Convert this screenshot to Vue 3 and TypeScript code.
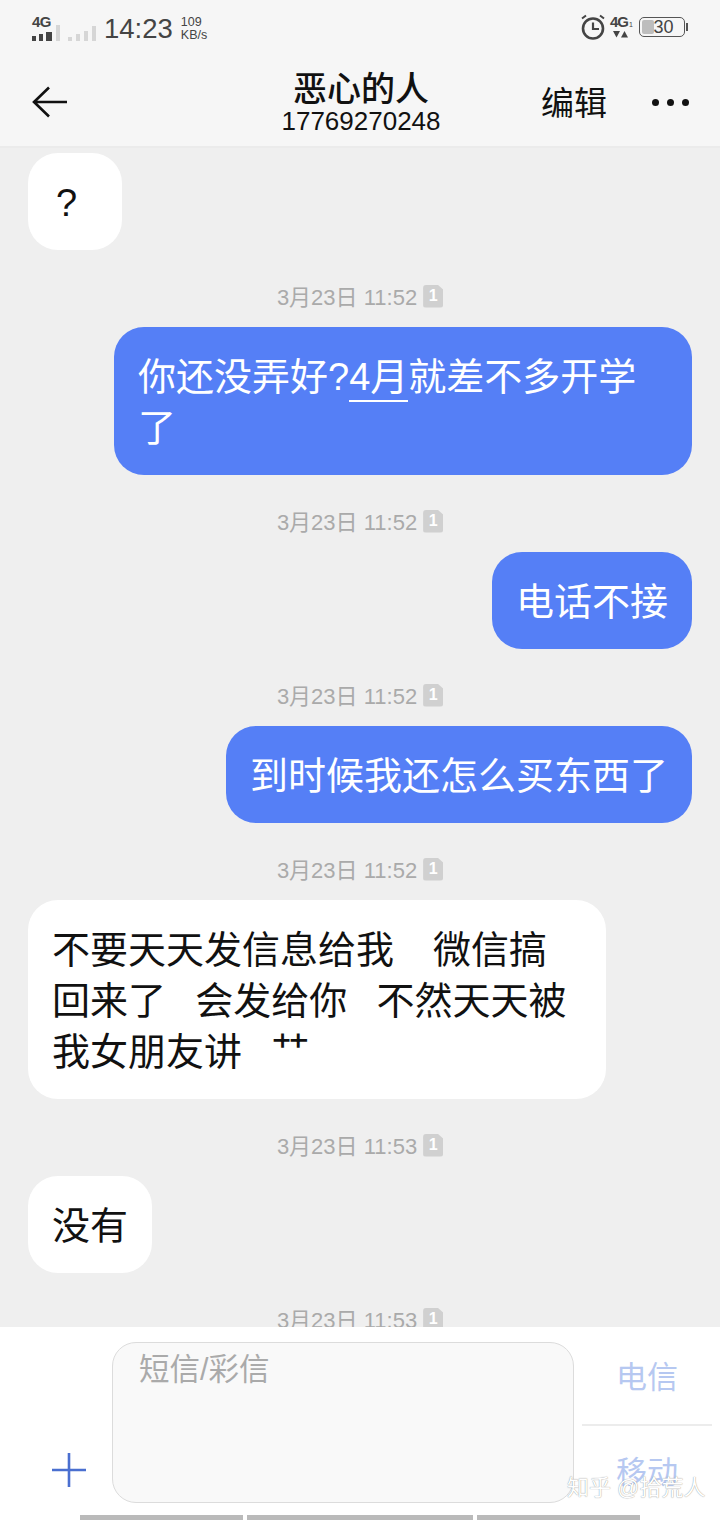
<script setup lang="ts">
interface Msg {
  side: 'in' | 'out'
  lines: string[]
  time?: string
  kind?: 'short' | 'full'
}
const messages: Msg[] = [
  { side: 'in', lines: ['?'], kind: 'short' },
  { side: 'out', time: '3月23日 11:52', lines: ['你还没弄好?', '了'], kind: 'full' },
  { side: 'out', time: '3月23日 11:52', lines: ['电话不接'] },
  { side: 'out', time: '3月23日 11:52', lines: ['到时候我还怎么买东西了'] },
  {
    side: 'in',
    time: '3月23日 11:52',
    lines: ['不要天天发信息给我    微信搞', '回来了   会发给你   不然天天被', '我女朋友讲   ⺿'],
    kind: 'full',
  },
  { side: 'in', time: '3月23日 11:53', lines: ['没有'] },
]
</script>

<template>
  <div class="phone">
    <header class="top">
      <div class="status">
        <div class="status-left">
          <div class="sig-col">
            <span class="sig-text">4G</span>
            <svg class="signal" width="66" height="17" viewBox="0 0 66 17">
              <rect x="0" y="11" width="4" height="5" fill="#444" />
              <rect x="7" y="9" width="4" height="7" fill="#444" />
              <rect x="14" y="7" width="6" height="9" fill="#444" />
              <rect x="24" y="0" width="4" height="16" fill="#d6d6d6" />
              <rect x="36" y="12" width="4" height="4" fill="#d6d6d6" />
              <rect x="44" y="9" width="4" height="7" fill="#d6d6d6" />
              <rect x="52" y="6" width="4" height="10" fill="#d6d6d6" />
              <rect x="60" y="1" width="4" height="15" fill="#d6d6d6" />
            </svg>
          </div>
          <span class="clock">14:23</span>
          <span class="speed"><span>109</span><span>KB/s</span></span>
        </div>
        <div class="status-right">
          <svg width="26" height="26" viewBox="0 0 26 26" fill="none" stroke="#444">
            <circle cx="13" cy="14.500" r="10" stroke-width="2.600" />
            <path d="M13 8.500v6.500h6" stroke-width="2.200" />
            <path d="M2 4.500 6 1.500M24 4.500 20 1.500" stroke-width="2" />
          </svg>
          <div class="net">
            <div class="net-top"><span class="net-text">4G</span><span class="net-sub">1</span></div>
            <svg class="net-arrows" width="16" height="7" viewBox="0 0 16 7">
              <path d="M0 0h7L3.500 6.500z" fill="#444" />
              <path d="M8 6.500h7L11.500 0z" fill="#444" />
            </svg>
          </div>
          <div class="battery">
            <div class="battery-fill"></div>
            <span class="battery-num">30</span>
            <div class="battery-cap"></div>
          </div>
        </div>
      </div>
      <div class="nav">
        <div class="nav-left">
          <svg width="36" height="32" viewBox="0 0 36 32" fill="none" stroke="#111" stroke-width="2.600">
            <path d="M35 16H2M17 1.500 2 16l15 14.500" />
          </svg>
        </div>
        <div class="nav-title">
          <span class="name">恶心的人</span>
          <span class="phone-num">17769270248</span>
        </div>
        <div class="nav-right">
          <span class="edit">编辑</span>
          <div class="dots"><i></i><i></i><i></i></div>
        </div>
      </div>
    </header>

    <main class="messages">
      <template v-for="(m, i) in messages" :key="i">
        <div v-if="m.time" class="time">
          <span>{{ m.time }}</span>
          <span class="sim">1</span>
        </div>
        <div class="row" :class="m.side">
          <div class="bubble" :class="[m.side, m.kind]">
            <template v-if="i === 1">
              <div class="line">你还没弄好?<span class="link">4月</span>就差不多开学</div>
              <div class="line">了</div>
            </template>
            <template v-else>
              <div v-for="(l, j) in m.lines" :key="j" class="line">{{ l }}</div>
            </template>
          </div>
        </div>
      </template>
      <div class="time">
        <span>3月23日 11:53</span>
        <span class="sim">1</span>
      </div>
    </main>

    <footer class="composer">
      <div class="plus-cell">
        <svg width="34" height="34" viewBox="0 0 34 34" stroke="#4a6fd0" stroke-width="2.600">
          <path d="M17 0v34M0 17h34" />
        </svg>
      </div>
      <div class="input">短信/彩信</div>
      <div class="sims">
        <div class="sim-btn">电信</div>
        <div class="sim-btn second">移动</div>
      </div>
      <span class="watermark">知乎 @拾荒人</span>
    </footer>
    <div class="home">
      <i class="seg-a"></i><i class="seg-b"></i><i class="seg-a"></i>
    </div>
  </div>
</template>

<style>
html,
body {
  margin: 0;
  background: #fff;
}
</style>

<style scoped>
.phone {
  width: 720px;
  height: 1520px;
  display: flex;
  flex-direction: column;
  overflow: hidden;
  position: relative;
  background: #efefef;
  font-family: "Liberation Sans", "Noto Sans CJK SC", sans-serif;
  color: #111;
}
.top {
  height: 148px;
  box-sizing: border-box;
  flex: none;
  background: #f6f6f6;
  border-bottom: 2px solid #ebebeb;
}
.status {
  height: 58px;
  display: flex;
  justify-content: space-between;
  align-items: flex-start;
  padding: 14px 35px 0 32px;
  box-sizing: border-box;
}
.status-left {
  display: flex;
  align-items: center;
  gap: 6px;
}
.sig-col {
  display: flex;
  flex-direction: column;
  height: 26px;
}
.sig-text {
  font-size: 15px;
  font-weight: bold;
  line-height: 12px;
  height: 12px;
  color: #444;
  letter-spacing: -0.5px;
}
.signal {
  margin-top: -3px;
}
.clock {
  font-size: 27.500px;
  line-height: 30px;
  color: #444;
}
.speed {
  display: flex;
  flex-direction: column;
  font-size: 12.500px;
  line-height: 13px;
  color: #444;
  margin-left: 2px;
}
.status-right {
  display: flex;
  align-items: center;
  gap: 4px;
}
.net {
  width: 24px;
  height: 24px;
  display: flex;
  flex-direction: column;
}
.net-top {
  display: flex;
  align-items: flex-end;
  height: 14px;
}
.net-text {
  font-size: 15px;
  font-weight: bold;
  line-height: 14px;
  color: #444;
  letter-spacing: -1px;
}
.net-sub {
  font-size: 7px;
  line-height: 8px;
  color: #444;
  margin-left: 1px;
}
.net-arrows {
  margin: 2px 0 0 3px;
}
.battery {
  width: 46px;
  height: 20px;
  box-sizing: border-box;
  border: 1px solid #555;
  border-radius: 5px;
  position: relative;
  margin-left: 1px;
  display: flex;
  align-items: center;
  justify-content: center;
}
.battery-fill {
  position: absolute;
  left: 2px;
  top: 2px;
  bottom: 2px;
  width: 12px;
  background: #bdbdbd;
  border-radius: 2px;
}
.battery-num {
  position: relative;
  font-size: 18px;
  line-height: 18px;
  color: #444;
  margin-left: 3px;
}
.battery-cap {
  position: absolute;
  right: -4px;
  top: 5px;
  width: 2px;
  height: 8px;
  background: #555;
}
.nav {
  height: 88px;
  box-sizing: border-box;
  display: grid;
  grid-template-columns: 1fr auto 1fr;
  align-items: center;
  padding: 2px 31px 0 33px;
}
.nav-left {
  display: flex;
  margin: -2px 0 0 -1px;
}
.nav-title {
  display: flex;
  flex-direction: column;
  align-items: center;
}
.name {
  font-size: 34px;
  font-weight: 500;
  line-height: 36px;
  color: #111;
}
.phone-num {
  font-size: 26px;
  line-height: 29px;
  color: #111;
}
.nav-right {
  display: flex;
  justify-content: flex-end;
  align-items: center;
  gap: 45px;
}
.edit {
  font-size: 33px;
  line-height: 40px;
  margin-top: 2px;
}
.dots {
  display: flex;
  gap: 8px;
  margin-top: -2px;
}
.dots i {
  width: 7px;
  height: 7px;
  border-radius: 50%;
  background: #111;
}
.messages {
  flex: 1;
  min-height: 0;
  overflow: hidden;
  padding: 5px 28px 0;
}
.time {
  height: 77px;
  display: flex;
  align-items: center;
  justify-content: center;
  gap: 6px;
  font-size: 22px;
  color: #aaa;
  padding-top: 21px;
  padding-bottom: 8px;
  box-sizing: border-box;
}
.sim {
  width: 20px;
  height: 23px;
  margin-top: 2px;
  background: #d0d0d0;
  color: #fff;
  font-size: 16px;
  font-weight: bold;
  display: flex;
  align-items: center;
  justify-content: center;
  border-radius: 3px;
  clip-path: polygon(0 0, 72% 0, 100% 22%, 100% 100%, 0 100%);
}
.row {
  display: flex;
}
.row.out {
  justify-content: flex-end;
}
.bubble {
  padding: 25px 24px 21px;
  border-radius: 30px;
  font-size: 38px;
  line-height: 51px;
  white-space: pre;
  word-spacing: -0.800px;
  box-sizing: border-box;
}
.bubble.in {
  background: #fff;
  color: #111;
}
.bubble.out {
  background: #557ff6;
  color: #fff;
}
.bubble.short {
  width: 94px;
  padding-left: 28px;
}
.bubble.full {
  width: 578px;
}
.link {
  border-bottom: 2px solid #fff;
  padding-bottom: 2px;
}
.composer {
  flex: none;
  height: 188px;
  background: #fff;
  box-sizing: border-box;
  padding: 15px 8px 12px 52px;
  display: flex;
  align-items: stretch;
  position: relative;
}
.plus-cell {
  width: 60px;
  display: flex;
  align-items: flex-end;
  padding-bottom: 16px;
}
.input {
  width: 462px;
  box-sizing: border-box;
  background: #f9f9f9;
  border: 1px solid #dcdcdc;
  border-radius: 24px;
  padding: 8px 26px;
  font-size: 30.500px;
  line-height: 36px;
  color: #aaa;
}
.sims {
  flex: 1;
  margin-left: 8px;
  display: flex;
  flex-direction: column;
}
.sim-btn {
  height: 84px;
  box-sizing: border-box;
  display: flex;
  align-items: center;
  justify-content: center;
  font-size: 31px;
  color: #b6c8f1;
  border-bottom: 2px solid #ececec;
  padding-bottom: 18px;
}
.sim-btn.second {
  border-bottom: 0;
  height: 77px;
  padding-top: 10px;
  padding-bottom: 0;
}
.watermark {
  position: absolute;
  left: 567px;
  top: 147px;
  font-size: 22px;
  line-height: 28px;
  color: #fff;
  text-shadow: 0 0 1px #777;
}
.home {
  flex: none;
  height: 5px;
  background: #fff;
  padding-left: 80px;
  display: flex;
  gap: 4px;
}
.home i {
  background: #bababa;
  display: block;
  height: 5px;
}
.seg-a {
  width: 163px;
}
.seg-b {
  width: 226px;
}
</style>
